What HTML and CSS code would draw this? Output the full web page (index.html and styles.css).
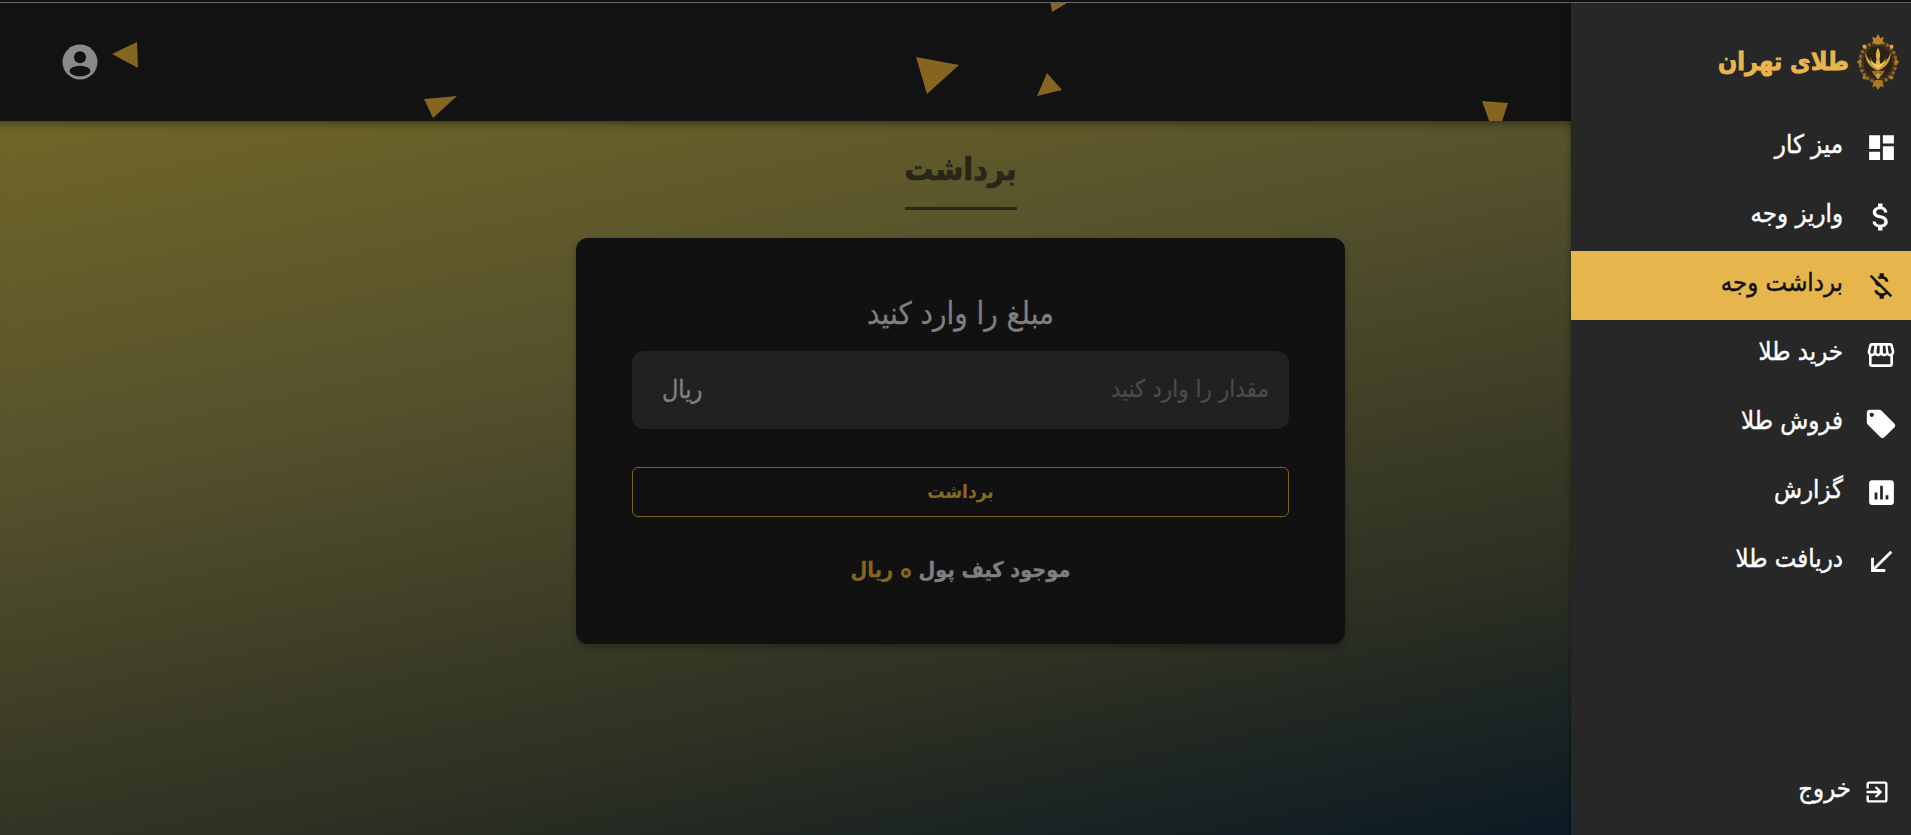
FILE: index.html
```html
<!DOCTYPE html>
<html lang="fa">
<head>
<meta charset="utf-8">
<title>برداشت</title>
<link rel="stylesheet" href="styles.css">
</head>
<body>
<div class="top-line"></div>
<div class="app">
  <div class="main">
    <header class="header">
      <svg class="avatar" viewBox="0 0 36 36" width="36" height="36">
        <circle cx="18" cy="18" r="17.500" fill="#8a8a8a"/>
        <circle cx="18" cy="13.300" r="6" fill="#121212"/>
        <ellipse cx="18" cy="27" rx="10.500" ry="5.200" fill="#121212"/>
      </svg>
      <svg class="confetti" width="1571" height="118" viewBox="0 3 1571 118">
        <polygon points="112,54 137,42 138,68"/>
        <polygon points="424,99 457,96 433,118"/>
        <polygon points="916,57 959,65 927,94"/>
        <polygon points="1047,73 1062,90 1037,96"/>
        <polygon points="1050,0 1067,3 1052,12"/>
        <polygon points="1482,101 1508,103 1496,140"/>
      </svg>
    </header>
    <section class="content">
      <h1 class="page-title">برداشت</h1>
      <div class="card">
        <h2 class="card-title">مبلغ را وارد کنید</h2>
        <div class="field">
          <span class="placeholder">مقدار را وارد کنید</span>
          <span class="unit">ریال</span>
        </div>
        <button class="submit">برداشت</button>
        <p class="balance">موجود کیف پول <span class="balance-value"><span class="zero">۰</span> ریال</span></p>
      </div>
    </section>
  </div>
  <aside class="sidebar">
    <div class="logo">
      <svg class="crest" width="46" height="58" viewBox="0 0 46 60">
        <ellipse cx="23" cy="30" rx="18.500" ry="20.500" fill="none" stroke="#8f6320" stroke-width="3.400" stroke-dasharray="3.500 1.500"/>
        <ellipse cx="23" cy="30" rx="15.500" ry="17.500" fill="#2c2316" stroke="#5a3d15" stroke-width="1"/>
        <path d="M23 1l2.500 4.500 3.500-1.500-1.500 6-2 2h-5l-2-2-1.500-6 3.500 1.500z" fill="#b8862f"/>
        <path d="M23 59l-2.500-4-3.500 1 1.500-5.500 2-2h5l2 2 1.500 5.500-3.500-1z" fill="#a87825"/>
        <path d="M1 30l4-3.500 1 3.500-1 3.500zM45 30l-4-3.500-1 3.500 1 3.500z" fill="#a87825"/>
        <path d="M23 15c2 4 3 8 1.500 12l1.500 7h-6l1.500-7C20 23 21 19 23 15z" fill="#e0b050"/>
        <path d="M10 19c-1 9 4 17 13 20 9-3 14-11 13-20-1 6-4 10-7.500 12l-5.500 3-5.500-3C14 29 11 25 10 19z" fill="#cf9c3c"/>
        <path d="M15 25c1 4 4 7 8 8 4-1 7-4 8-8-1 7-4 10-8 12-4-2-7-5-8-12z" fill="#f0c564"/>
        <path d="M16 39h14l-3 5h-8z" fill="#9a6c22"/>
        <path d="M23 41l3 3-3 4-3-4z" fill="#d3a03f"/>
        <circle cx="9" cy="14" r="2" fill="#d9a845"/>
        <circle cx="37" cy="14" r="2" fill="#d9a845"/>
        <circle cx="9" cy="46" r="2" fill="#a87825"/>
        <circle cx="37" cy="46" r="2" fill="#a87825"/>
      </svg>
      <span class="logo-text">طلای تهران</span>
    </div>
    <nav class="nav">
      <a class="nav-item">
        <span class="nav-icon"><svg viewBox="0 0 24 24" width="33" height="33"><path fill="currentColor" d="M3 13h8V3H3zm0 8h8v-6H3zm10 0h8V11h-8zm0-18v6h8V3z"/></svg></span>
        <span class="nav-label">میز کار</span>
      </a>
      <a class="nav-item">
        <span class="nav-icon"><svg viewBox="0 0 24 24" width="36" height="36"><path fill="currentColor" d="M11.800 10.900c-2.270-.59-3-1.200-3-2.150 0-1.090 1.010-1.850 2.700-1.850 1.780 0 2.440.85 2.500 2.100h2.210c-.07-1.720-1.120-3.300-3.210-3.810V3h-3v2.160c-1.940.42-3.500 1.680-3.500 3.610 0 2.310 1.910 3.460 4.700 4.130 2.500.6 3 1.480 3 2.410 0 .69-.49 1.790-2.700 1.790-2.060 0-2.870-.92-2.980-2.100h-2.200c.12 2.190 1.760 3.420 3.680 3.830V21h3v-2.150c1.950-.37 3.500-1.500 3.500-3.550 0-2.840-2.430-3.810-4.700-4.400z"/></svg></span>
        <span class="nav-label">واریز وجه</span>
      </a>
      <a class="nav-item active">
        <span class="nav-icon"><svg viewBox="0 0 24 24" width="34" height="34"><path fill="currentColor" d="M12.500 6.900c1.780 0 2.440.85 2.500 2.100h2.210c-.07-1.720-1.120-3.300-3.210-3.810V3h-3v2.160c-.53.12-1.030.3-1.480.54l1.470 1.470c.41-.17.910-.27 1.510-.27zM5.330 4.060L4.060 5.330 7.500 8.770c0 2.080 1.560 3.210 3.910 3.910l3.510 3.510c-.34.48-1.050.91-2.420.91-2.060 0-2.870-.92-2.980-2.100h-2.200c.12 2.190 1.760 3.420 3.680 3.830V21h3v-2.150c.96-.18 1.820-.55 2.450-1.120l2.220 2.220 1.270-1.270L5.330 4.060z"/></svg></span>
        <span class="nav-label">برداشت وجه</span>
      </a>
      <a class="nav-item">
        <span class="nav-icon"><svg viewBox="0 0 24 24" width="32" height="32"><path fill="currentColor" d="M21.900 8.890l-1.050-4.370c-.22-.9-1-1.520-1.910-1.520H5.050c-.9 0-1.690.63-1.900 1.520L2.100 8.890c-.24 1.020-.02 2.060.62 2.880.08.11.19.19.28.29V19c0 1.100.9 2 2 2h14c1.100 0 2-.9 2-2v-6.940c.09-.09.200-.18.280-.28.64-.82.870-1.870.62-2.890zM5.020 5h1.970l-.58 4.860c-.08.65-.6 1.140-1.210 1.140-.49 0-.8-.29-.93-.47-.27-.34-.36-.79-.26-1.210L5.020 5zM11 5v4.700c0 .7-.53 1.300-1.240 1.300-.72 0-1.240-.7-1.160-1.480L9.190 5H11zm7.970 0l1.030 4.320c.1.430.01.870-.26 1.210-.14.180-.44.470-.94.470-.61 0-1.140-.49-1.210-1.140L17 5h1.970zM15.800 9.520c.08.780-.44 1.480-1.160 1.480-.71 0-1.240-.6-1.240-1.300V5h1.810l.59 4.520zM19 19H5v-6.030c.08.010.15.030.23.030.87 0 1.660-.36 2.240-.95.6.600 1.400.95 2.310.95.870 0 1.650-.36 2.230-.93.59.570 1.390.93 2.290.93.840 0 1.640-.35 2.240-.95.580.59 1.370.95 2.240.95.080 0 .150-.020.230-.030V19z"/></svg></span>
        <span class="nav-label">خرید طلا</span>
      </a>
      <a class="nav-item">
        <span class="nav-icon"><svg viewBox="0 0 24 24" width="34" height="34"><path fill="currentColor" d="M21.410 11.580l-9-9C12.050 2.220 11.550 2 11 2H4c-1.100 0-2 .9-2 2v7c0 .55.220 1.050.59 1.420l9 9c.36.360.86.580 1.410.580s1.050-.220 1.410-.590l7-7c.37-.36.590-.86.590-1.410s-.230-1.060-.590-1.420zM5.500 7C4.670 7 4 6.330 4 5.500S4.670 4 5.500 4 7 4.670 7 5.500 6.330 7 5.500 7z"/></svg></span>
        <span class="nav-label">فروش طلا</span>
      </a>
      <a class="nav-item">
        <span class="nav-icon"><svg viewBox="0 0 24 24" width="33" height="33"><path fill="currentColor" d="M19 3H5c-1.100 0-2 .9-2 2v14c0 1.100.9 2 2 2h14c1.100 0 2-.9 2-2V5c0-1.100-.9-2-2-2zM9 17H7v-5h2v5zm4 0h-2V7h2v10zm4 0h-2v-3h2v3z"/></svg></span>
        <span class="nav-label">گزارش</span>
      </a>
      <a class="nav-item">
        <span class="nav-icon"><svg viewBox="0 0 24 24" width="34" height="34"><path fill="currentColor" d="M20 5.410L18.590 4 7 15.590V9H5v10h10v-2H8.410z"/></svg></span>
        <span class="nav-label">دریافت طلا</span>
      </a>
    </nav>
    <a class="logout">
      <span class="logout-icon"><svg viewBox="0 0 24 24" width="28" height="28"><path fill="currentColor" d="M10.090 15.590L11.500 17l5-5-5-5-1.410 1.410L12.670 11H3v2h9.670l-2.580 2.590zM19 3H5c-1.110 0-2 .9-2 2v4h2V5h14v14H5v-4H3v4c0 1.100.89 2 2 2h14c1.100 0 2-.9 2-2V5c0-1.100-.9-2-2-2z"/></svg></span>
      <span class="logout-label">خروج</span>
    </a>
  </aside>
</div>
</body>
</html>
```
FILE: styles.css
```css
* { box-sizing: border-box; }
html, body { margin: 0; height: 100%; overflow: hidden; }
body {
  font-family: "DejaVu Sans Condensed", "DejaVu Sans", sans-serif;
  font-stretch: condensed;
  background: #121212;
  display: flex;
  flex-direction: column;
}
.top-line {
  height: 3px;
  background: #121212;
  border-bottom: 1px solid #666;
}
.app {
  flex: 1;
  display: flex;
  min-height: 0;
}
.main {
  flex: 1;
  display: flex;
  flex-direction: column;
  min-width: 0;
}
.header {
  position: relative;
  height: 118px;
  flex: none;
  background: #121212;
  overflow: hidden;
  display: flex;
  align-items: center;
  padding: 0 0 0 62px;
  z-index: 1;
}
.avatar { position: relative; z-index: 1; }
.confetti {
  position: absolute;
  left: 0;
  top: 0;
  fill: #85651f;
}
.content {
  flex: 1;
  display: flex;
  flex-direction: column;
  align-items: center;
  background: linear-gradient(168deg, #716628 0%, #54512c 35%, #2c2f22 75%, #0b1a24 100%);
  box-shadow: inset 0 10px 10px -8px rgba(0,0,0,.45);
  padding: 24px 0 0 350px;
}
.page-title {
  margin: 0;
  width: 112px;
  height: 65px;
  border-bottom: 3px solid #272618;
  color: #272618;
  font-size: 32px;
  font-weight: 700;
  -webkit-text-stroke: .7px currentColor;
  text-align: center;
  line-height: 48px;
  white-space: nowrap;
}
.card {
  margin-top: 28px;
  width: 769px;
  height: 406px;
  background: #111;
  border-radius: 12px;
  padding: 54px 56px 0;
  box-shadow: 0 3px 6px rgba(0,0,0,.3);
  display: flex;
  flex-direction: column;
  align-items: stretch;
}
.card-title {
  margin: 0;
  height: 59px;
  text-align: center;
  font-size: 31px;
  line-height: 42px;
  font-weight: 400;
  -webkit-text-stroke: .3px currentColor;
  color: #7f7f7f;
}
.field {
  height: 78px;
  background: #212121;
  border-radius: 12px;
  direction: rtl;
  display: flex;
  align-items: center;
  justify-content: space-between;
  padding: 0 20px 0 30px;
}
.placeholder { color: #4b4b4b; font-size: 24px; margin-bottom: 2px; -webkit-text-stroke: .2px currentColor; }
.unit { color: #808080; font-size: 25px; margin-bottom: 2px; -webkit-text-stroke: .4px currentColor; }
.submit {
  margin-top: 38px;
  height: 50px;
  background: transparent;
  border: 1px solid #7d6120;
  border-radius: 6px;
  color: #8a6820;
  font: 700 19px "DejaVu Sans Condensed", "DejaVu Sans", sans-serif;
  font-stretch: condensed;
  padding-bottom: 3px;
}
.balance {
  margin: 40px 0 0;
  direction: rtl;
  text-align: center;
  font-size: 21.500px;
  font-weight: 700;
  -webkit-text-stroke: .3px currentColor;
  color: #7f7f7f;
}
.balance-value { color: #85651f; }
.zero {
  display: inline-block;
  width: 10px;
  height: 10px;
  border: 3px solid #85651f;
  border-radius: 50%;
  font-size: 6px;
  line-height: 4px;
  vertical-align: 2px;
  margin: 0 1px;
}
.sidebar {
  flex: none;
  width: 340px;
  background: #272727;
  display: flex;
  flex-direction: column;
  box-shadow: -2px 0 4px rgba(0,0,0,.2);
  z-index: 2;
}
.logo {
  height: 110px;
  direction: rtl;
  display: flex;
  align-items: center;
  gap: 6px;
  padding: 8px 10px 0 0;
  flex: none;
}
.logo-text {
  color: #e8b64d;
  font-size: 25px;
  font-weight: 700;
  -webkit-text-stroke: .8px currentColor;
  white-space: nowrap;
  margin-bottom: 2px;
}
.nav {
  display: flex;
  flex-direction: column;
}
.nav-item {
  height: 69px;
  direction: rtl;
  display: flex;
  align-items: center;
  color: #fff;
  font-size: 25.500px;
  white-space: nowrap;
}
.nav-label {
  -webkit-text-stroke: .4px currentColor;
  margin-bottom: 7px;
}
.nav-item.active {
  background: #e6b64c;
  color: #111;
}
.nav-icon {
  width: 68px;
  flex: none;
  display: flex;
  justify-content: center;
  padding-left: 8px;
}
.logout {
  margin-top: auto;
  margin-bottom: 25px;
  direction: rtl;
  display: flex;
  align-items: center;
  gap: 12px;
  color: #fff;
  font-size: 25.500px;
  padding-right: 20px;
}
.logout-label {
  -webkit-text-stroke: .4px currentColor;
  margin-bottom: 7px;
}
.logout-icon { display: flex; }
```
